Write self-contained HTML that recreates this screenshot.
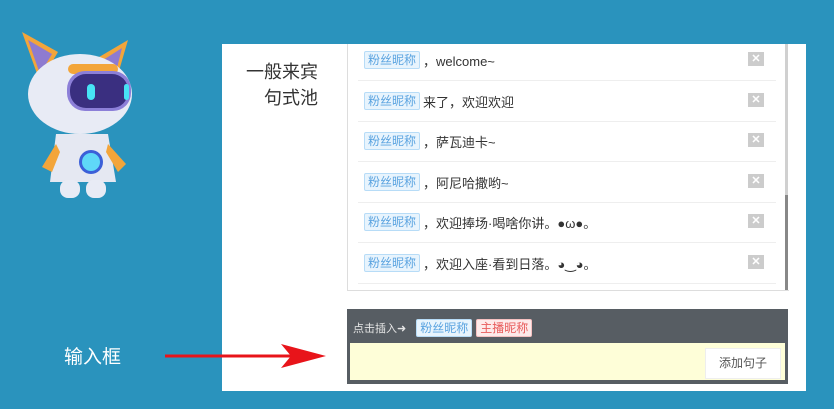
<!DOCTYPE html>
<html><head><meta charset="utf-8"><style>
body{margin:0;width:834px;height:409px;background:#2a93bd;position:relative;overflow:hidden;font-family:"Liberation Sans","Noto Sans CJK SC",sans-serif}
.panel{position:absolute;left:222px;top:44px;width:584px;height:347px;background:#fff}
.title{position:absolute;left:236px;top:59px;font-size:18px;color:#333;line-height:26px;text-align:right;width:82px}
.list{position:absolute;left:347px;top:44px;width:441px;height:246px;border-left:1px solid #ddd;border-bottom:1px solid #ddd;overflow:hidden}
.sb{position:absolute;left:785px;top:44px;width:3px;height:246px;background:#d0d0d0}
.sb2{position:absolute;left:785px;top:195px;width:3px;height:95px;background:#888}
.row{position:absolute;left:10px;width:418px;height:40px;border-bottom:1px solid #eee;font-size:13px;color:#333;display:flex;align-items:center}
.tag{display:inline-block;border:1px solid #b7dcf7;background:#e8f4fd;color:#5aa3e0;font-size:12px;padding:0 3px;line-height:16px;border-radius:2px;margin-left:6px;margin-right:3px}
.x{position:absolute;right:12px;top:12px;width:16px;height:14px;background:#ccc;color:#fff;font-size:11px;font-weight:bold;text-align:center;line-height:14px}
.box{position:absolute;left:347px;top:309px;width:441px;height:75px;background:#575d63}
.ins{position:absolute;left:6px;top:10px;font-size:11px;color:#e6e6e6;display:flex;align-items:center}
.t1{border:1px solid #b7dcf7;background:#e8f4fd;color:#5aa3e0;padding:0 3px;line-height:16px;border-radius:2px;margin-left:10px;font-size:12px}
.t2{border:1px solid #f5c0c0;background:#fdeaea;color:#e85b5b;padding:0 3px;line-height:16px;border-radius:2px;margin-left:4px;font-size:12px}
.inp{position:absolute;left:3px;top:34px;width:435px;height:37px;background:#fefed8}
.btn{position:absolute;right:4px;top:5px;width:74px;height:29px;background:#fff;border:1px solid #eee;font-size:12px;color:#555;text-align:center;line-height:29px}
.lbl{position:absolute;left:64px;top:342px;font-size:19px;color:#fff}
</style></head><body>
<svg style="position:absolute;left:10px;top:22px" width="130" height="185" viewBox="0 0 130 185">
<path d="M12 10 L48 30 L30 60 Z" fill="#f3a53a"/><path d="M18 18 L42 32 L30 52 Z" fill="#8e7bd0"/>
<path d="M118 18 L84 38 L104 66 Z" fill="#f3a53a"/><path d="M112 26 L90 40 L104 58 Z" fill="#8e7bd0"/>
<ellipse cx="70" cy="72" rx="52" ry="40" fill="#e8ebf5"/>
<rect x="58" y="42" width="50" height="10" rx="5" fill="#f3a53a"/>
<rect x="57" y="49" width="64" height="40" rx="18" fill="#8c7fd8"/>
<rect x="60" y="52" width="58" height="34" rx="16" fill="#3a2f80"/>
<rect x="77" y="62" width="8" height="16" rx="4" fill="#47e3f5"/><rect x="114" y="62" width="5" height="16" rx="2.5" fill="#47e3f5"/>
<path d="M46 112 L98 112 L106 160 L40 160 Z" fill="#e5e8f2"/>
<path d="M46 122 L32 145 L42 150 L50 130Z" fill="#f3a53a"/><path d="M98 122 L116 142 L108 150 L96 130Z" fill="#f3a53a"/>
<circle cx="81" cy="140" r="12" fill="#3b5fd8"/><circle cx="81" cy="140" r="9" fill="#5fd8f8"/>
<rect x="50" y="158" width="20" height="18" rx="8" fill="#e8ebf5"/><rect x="76" y="158" width="20" height="18" rx="8" fill="#e8ebf5"/>
</svg>
<div class="panel"></div>
<div class="title">一般来宾<br>&nbsp;句式池</div>
<div class="list">
<div class="row" style="top:-4px"><span class="tag">粉丝昵称</span>，welcome~<span class="x">✕</span></div>
<div class="row" style="top:37px"><span class="tag">粉丝昵称</span>来了，欢迎欢迎<span class="x">✕</span></div>
<div class="row" style="top:77px"><span class="tag">粉丝昵称</span>，萨瓦迪卡~<span class="x">✕</span></div>
<div class="row" style="top:118px"><span class="tag">粉丝昵称</span>，阿尼哈撒哟~<span class="x">✕</span></div>
<div class="row" style="top:158px"><span class="tag">粉丝昵称</span>，欢迎捧场·喝啥你讲。●ω●。<span class="x">✕</span></div>
<div class="row" style="top:199px"><span class="tag">粉丝昵称</span>，欢迎入座·看到日落。◕‿◕。<span class="x">✕</span></div>
</div>
<div class="sb"></div><div class="sb2"></div>
<div class="box"><div class="ins">点击插入➜<span class="t1">粉丝昵称</span><span class="t2">主播昵称</span></div>
<div class="inp"><div class="btn">添加句子</div></div></div>
<div class="lbl">输入框</div>
<svg style="position:absolute;left:163px;top:342px" width="165" height="28"><line x1="2" y1="14" x2="130" y2="14" stroke="#e8141a" stroke-width="3"/><path d="M118 2 L163 14 L118 26 L128 14 Z" fill="#e8141a"/></svg>
</body></html>
